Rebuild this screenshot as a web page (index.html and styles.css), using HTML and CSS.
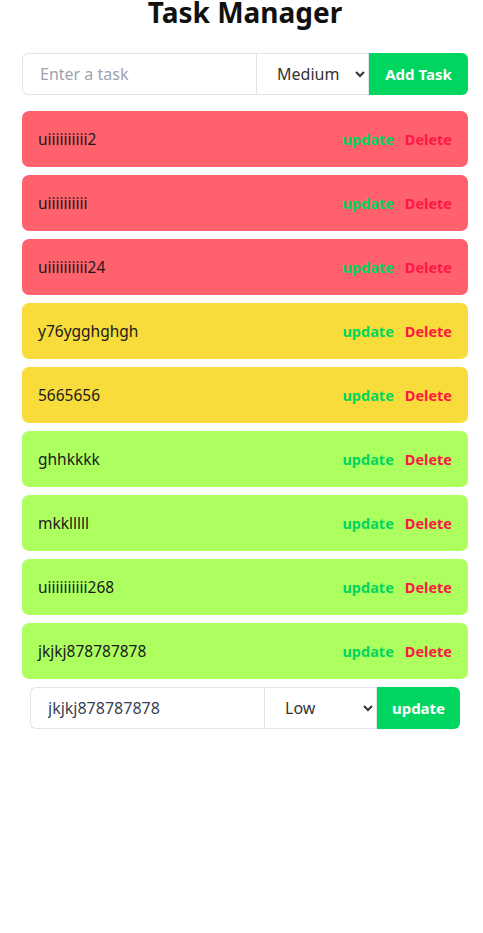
FILE: index.html
```html
<!DOCTYPE html>
<html>
<head>
<meta charset="utf-8">
<link rel="stylesheet" href="styles.css">
</head>
<body>
<div class="app">
  <h1 class="title">Task Manager</h1>
  <form class="add-form">
    <input class="field" type="text" placeholder="Enter a task">
    <select class="prio">
      <option>Low</option>
      <option selected>Medium</option>
      <option>High</option>
    </select>
    <button type="button" class="btn">Add Task</button>
  </form>
  <ul class="list">
    <li class="task high"><span class="name">uiiiiiiiiii2</span><span class="actions"><button class="upd">update</button><button class="del">Delete</button></span></li>
    <li class="task high"><span class="name">uiiiiiiiiii</span><span class="actions"><button class="upd">update</button><button class="del">Delete</button></span></li>
    <li class="task high"><span class="name">uiiiiiiiiii24</span><span class="actions"><button class="upd">update</button><button class="del">Delete</button></span></li>
    <li class="task medium"><span class="name">y76ygghghgh</span><span class="actions"><button class="upd">update</button><button class="del">Delete</button></span></li>
    <li class="task medium"><span class="name">5665656</span><span class="actions"><button class="upd">update</button><button class="del">Delete</button></span></li>
    <li class="task low"><span class="name">ghhkkkk</span><span class="actions"><button class="upd">update</button><button class="del">Delete</button></span></li>
    <li class="task low"><span class="name">mkklllll</span><span class="actions"><button class="upd">update</button><button class="del">Delete</button></span></li>
    <li class="task low"><span class="name">uiiiiiiiiii268</span><span class="actions"><button class="upd">update</button><button class="del">Delete</button></span></li>
    <li class="task low"><span class="name">jkjkj878787878</span><span class="actions"><button class="upd">update</button><button class="del">Delete</button></span></li>
  </ul>
  <form class="add-form edit-form">
    <input class="field" type="text" value="jkjkj878787878">
    <select class="prio">
      <option selected>Low</option>
      <option>Medium</option>
      <option>High</option>
    </select>
    <button type="button" class="btn">update</button>
  </form>
</div>
</body>
</html>
```

FILE: styles.css
```css
* { box-sizing: border-box; }
body {
  margin: 0;
  background: #fff;
  font-family: "Noto Sans", "Open Sans", sans-serif;
  color: #111;
}
.app {
  padding: 0 15px 0 22px;
}
.title {
  margin: -6px 0 0;
  text-align: center;
  font-size: 28px;
  font-weight: 700;
  line-height: 36px;
}
.add-form {
  display: flex;
  height: 42px;
  margin-top: 23px;
}
.field {
  width: 234px;
  border: 1px solid #e2e4ea;
  border-right: none;
  border-radius: 6px 0 0 6px;
  padding: 0 17px;
  font: 16px "Noto Sans", sans-serif;
  color: #374151;
  outline: none;
}
.field::placeholder { color: #9ca3af; }
.prio {
  width: 113px;
  border: 1px solid #e2e4ea;
  background: #fff;
  padding: 0 4px 0 16px;
  font: 16px "Noto Sans", sans-serif;
  color: #333;
  outline: none;
}
.btn {
  flex: 1;
  border: none;
  background: #00d65f;
  color: #fff;
  font: 700 15px "Noto Sans", sans-serif;
  border-radius: 0 6px 6px 0;
}
.list {
  list-style: none;
  margin: 16px 0 0;
  padding: 0;
  display: flex;
  flex-direction: column;
  gap: 8px;
}
.task {
  height: 56px;
  border-radius: 7px;
  display: flex;
  align-items: center;
  justify-content: space-between;
  padding: 0 16px 0 16px;
  font-size: 15.5px;
}
.high { background: #ff616d; }
.medium { background: #f7dc3b; }
.low { background: #adff5f; }
.name { color: #1a1a1a; }
.actions { display: flex; gap: 11px; }
.actions button {
  border: none;
  background: none;
  padding: 0;
  font: 700 14.5px "Noto Sans", sans-serif;
  cursor: pointer;
}
.upd { color: #00d65f; }
.del { color: #ff1744; }
.edit-form {
  margin: 8px 8px 0;
}
.edit-form .btn { flex: 0 0 83px; }
```
